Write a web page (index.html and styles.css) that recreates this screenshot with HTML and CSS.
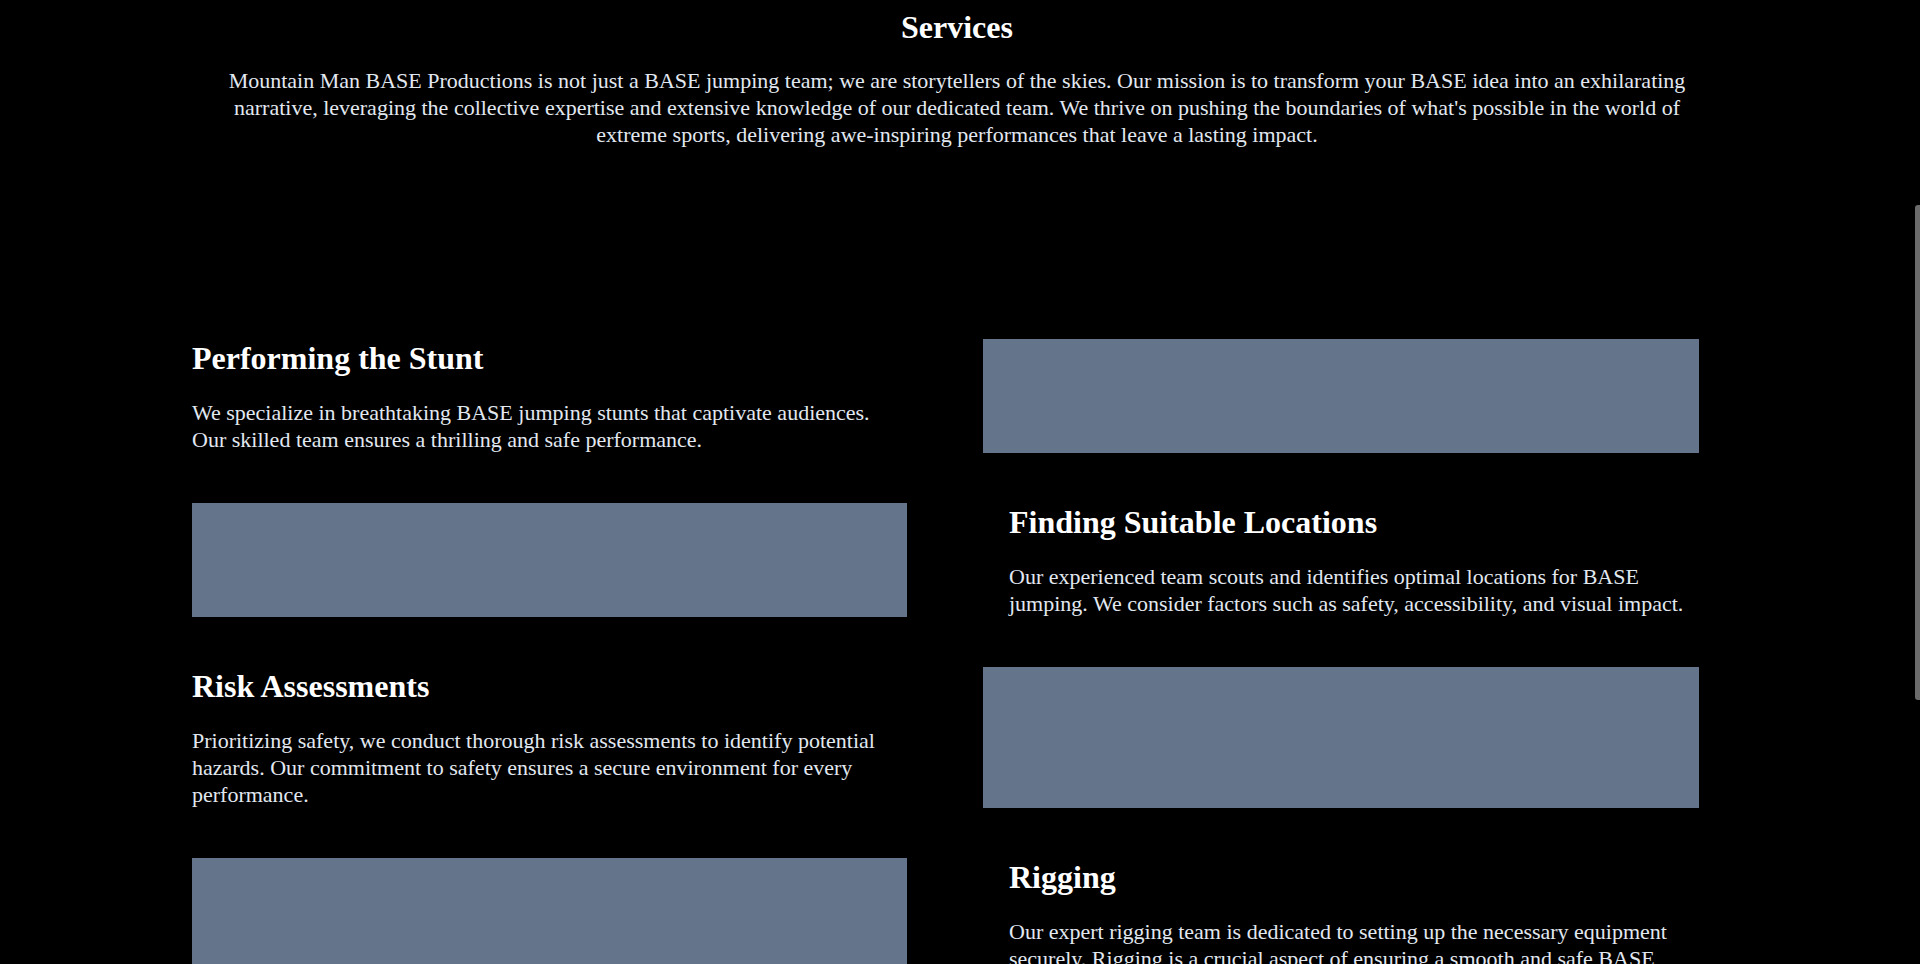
FILE: index.html
```html
<!DOCTYPE html>
<html lang="en">
<head>
<meta charset="utf-8">
<title>Services - Mountain Man BASE Productions</title>
<link rel="stylesheet" href="styles.css">
</head>
<body>
<div class="hero"></div>
<section class="services">
  <h1 class="services-title">Services</h1>
  <p class="services-intro">Mountain Man BASE Productions is not just a BASE jumping team; we are storytellers of the skies. Our mission is to transform your BASE idea into an exhilarating narrative, leveraging the collective expertise and extensive knowledge of our dedicated team. We thrive on pushing the boundaries of what's possible in the world of extreme sports, delivering awe-inspiring performances that leave a lasting impact.</p>
  <div class="services-grid">
    <div class="service-text">
      <h2>Performing the Stunt</h2>
      <p>We specialize in breathtaking BASE jumping stunts that captivate audiences. Our skilled team ensures a thrilling and safe performance.</p>
    </div>
    <div class="service-image"></div>

    <div class="service-image"></div>
    <div class="service-text right">
      <h2>Finding Suitable Locations</h2>
      <p>Our experienced team scouts and identifies optimal locations for BASE jumping. We consider factors such as safety, accessibility, and visual impact.</p>
    </div>

    <div class="service-text">
      <h2>Risk Assessments</h2>
      <p>Prioritizing safety, we conduct thorough risk assessments to identify potential hazards. Our commitment to safety ensures a secure environment for every performance.</p>
    </div>
    <div class="service-image"></div>

    <div class="service-image"></div>
    <div class="service-text right">
      <h2>Rigging</h2>
      <p>Our expert rigging team is dedicated to setting up the necessary equipment securely. Rigging is a crucial aspect of ensuring a smooth and safe BASE jumping experience.</p>
    </div>
  </div>
</section>
<div class="scroll-thumb"></div>
<script src="script.js"></script>
</body>
</html>
```

FILE: styles.css
```css
html {
  background: #000;
}
::-webkit-scrollbar {
  width: 6px;
}
::-webkit-scrollbar-track {
  background: #000;
}
::-webkit-scrollbar-thumb {
  background: #6b6b6b;
  border-radius: 3px;
}
body {
  margin: 0 6px 0 0;
  background: #000;
  color: #e2e8f0;
  font-family: "Liberation Serif", "Times New Roman", serif;
}
.hero {
  height: 400px;
}
.services {
  padding: 8px 0 480px;
}
.services-title {
  margin: 0;
  font-size: 32px;
  line-height: 38px;
  font-weight: 700;
  color: #fff;
  text-align: center;
}
.services-intro {
  max-width: 1480px;
  margin: 21px auto 0;
  font-size: 22px;
  line-height: 27px;
  text-align: center;
}
.services-grid {
  display: grid;
  grid-template-columns: 715px 716px;
  column-gap: 76px;
  row-gap: 50px;
  margin-top: 191px;
  padding-left: 192px;
}
.service-text h2 {
  margin: 0 0 22px;
  font-size: 32px;
  line-height: 38px;
  font-weight: 700;
  color: #fff;
}
.service-text p {
  margin: 0;
  font-size: 22px;
  line-height: 27px;
}
.service-text.right {
  padding-left: 26px;
}
.service-image {
  background: #64748b;
}
.scroll-thumb {
  position: fixed;
  top: 205px;
  right: 0;
  width: 5px;
  height: 495px;
  background: #6b6b6b;
  border-radius: 3px 0 0 3px;
}
```

FILE: script.js
```js
window.scrollTo(0, 400);
```
